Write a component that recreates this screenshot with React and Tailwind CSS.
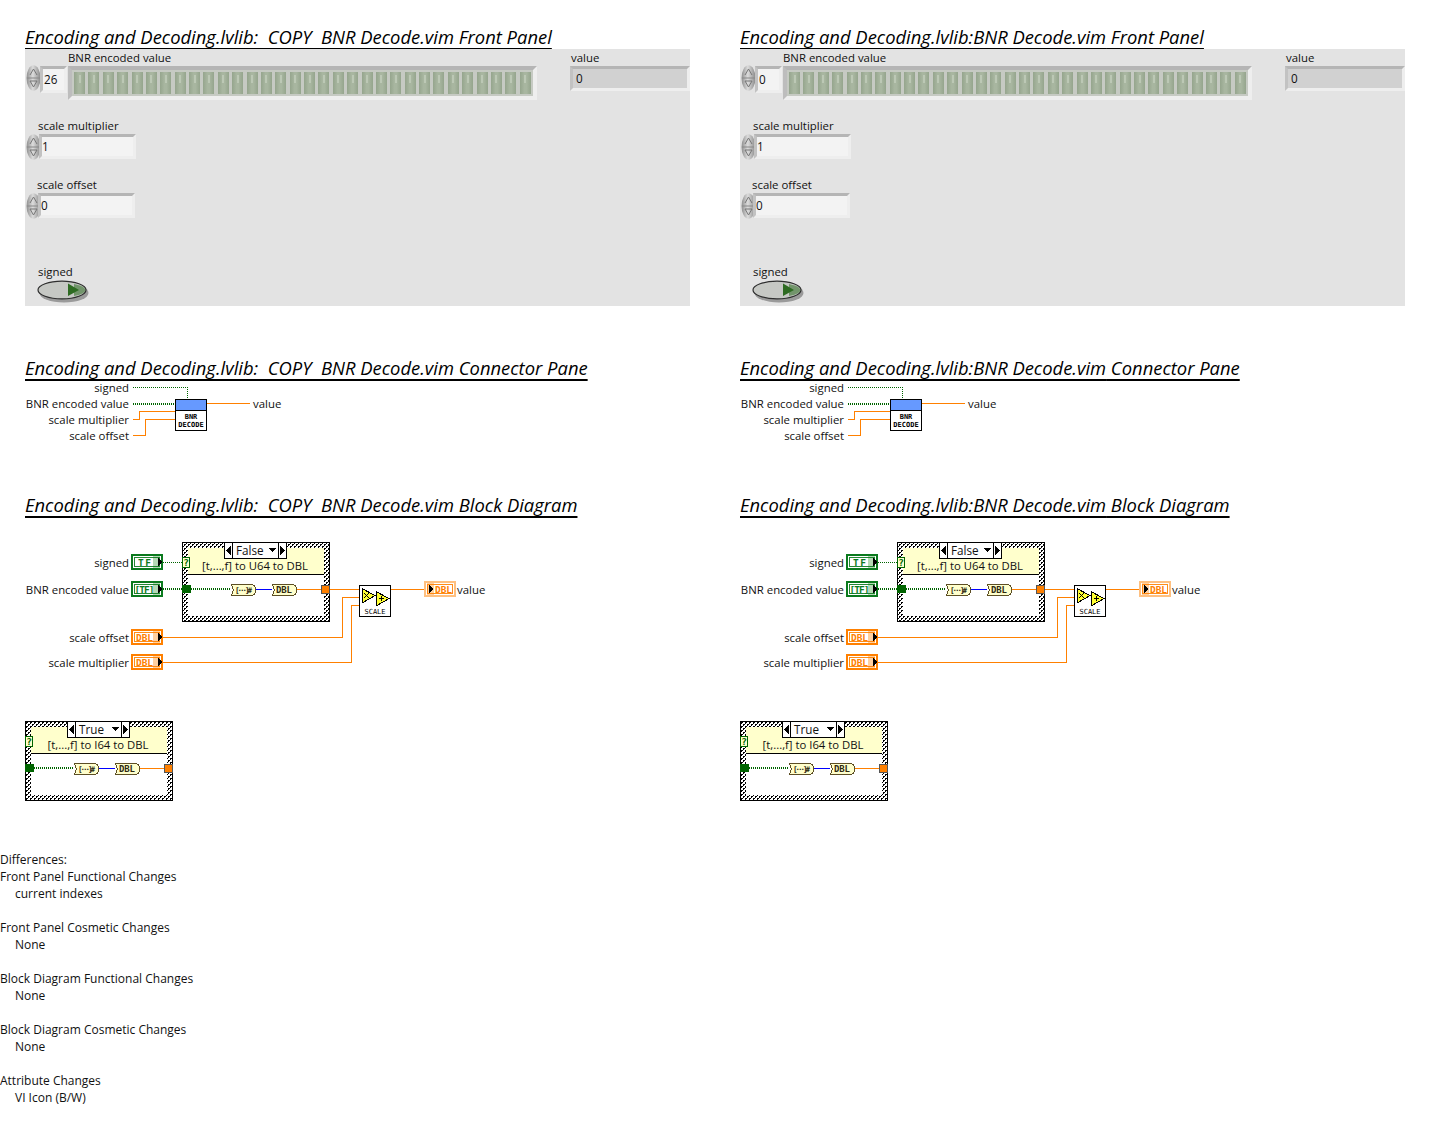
const FONT = 'font-["Open_Sans","Noto_Sans",sans-serif]';
const ORANGE = '#ff8000';
const GREEN = '#006400';
const MONO = '"DejaVu Sans Mono", "Liberation Mono", monospace';

const SIDES = [
  { name: 'Encoding and Decoding.lvlib:  COPY  BNR Decode.vim', index: '26' },
  { name: 'Encoding and Decoding.lvlib:BNR Decode.vim', index: '0' },
];

const DIFFS = [
  ['Differences:'],
  ['Front Panel Functional Changes', 'current indexes'],
  [],
  ['Front Panel Cosmetic Changes', 'None'],
  [],
  ['Block Diagram Functional Changes', 'None'],
  [],
  ['Block Diagram Cosmetic Changes', 'None'],
  [],
  ['Attribute Changes', 'VI Icon (B/W)'],
];

function Title({ children, className = '' }) {
  return (
    <h2 className={`h-[22px] whitespace-pre text-[18.4px] leading-[20px] italic font-normal text-black underline decoration-[1.5px] underline-offset-[4px] ${className}`}>
      {children}
    </h2>
  );
}

// labels sit on the diagram canvas, x/y are the centre-left or centre-right point
function Label({ x, y, right, children }) {
  return (
    <span
      className="absolute -translate-y-1/2 whitespace-nowrap text-[11.4px] leading-[16px] text-[#111]"
      style={right ? { right: 715 - x, top: y } : { left: x, top: y }}
    >
      {children}
    </span>
  );
}

function Spinner({ x, y }) {
  return (
    <svg className="absolute" style={{ left: x, top: y }} width="15" height="26" viewBox="0 0 15 26">
      <defs>
        <linearGradient id="spin" x1="0" x2="1" y1="0" y2="0">
          <stop offset="0" stopColor="#8f8f8f" />
          <stop offset="0.45" stopColor="#dcdcdc" />
          <stop offset="1" stopColor="#8a8a8a" />
        </linearGradient>
      </defs>
      <ellipse cx="7.5" cy="13" rx="7" ry="12.8" fill="url(#spin)" />
      <line x1="1" y1="13" x2="14" y2="13" stroke="#888" />
      <path d="M7.5 4 L4 10 M7.5 4 L11 10" stroke="#777" fill="none" />
      <path d="M7.5 22 L4 16 M7.5 22 L11 16 M4 16 H11" stroke="#777" fill="none" />
    </svg>
  );
}

function Toggle({ x, y }) {
  return (
    <svg className="absolute" style={{ left: x, top: y }} width="52" height="23" viewBox="0 0 52 23">
      <ellipse cx="27" cy="13" rx="24.5" ry="9.5" fill="#9a9a9a" />
      <ellipse cx="25" cy="10" rx="24" ry="8.8" fill="#c6c8c4" stroke="#2f2f2f" strokeWidth="1.2" />
      <path d="M31 3.5 L42 10 L31 16 Z" fill="#2e6b22" />
      <path d="M37 4 Q48 6 48.5 10 Q48 14 37 16 Z" fill="#2e6b22" opacity="0.55" />
    </svg>
  );
}

function NumBox({ x, y, w, h, fill = 'bg-[#f3f3f3]', pad = 'pl-0', children }) {
  return (
    <div
      className={`absolute border-[3px] border-t-[#b5b5b5] border-l-[#c2c2c2] border-r-[#eeeeee] border-b-[#eeeeee] text-[11.7px] leading-[16px] text-[#111] pb-[2px] flex items-center ${pad} ${fill}`}
      style={{ left: x, top: y, width: w, height: h }}
    >
      {children}
    </div>
  );
}

function FrontPanel({ index }) {
  return (
    <div className="relative h-[257px] w-[665px] bg-[#e3e3e3]">
      <Label x={43} y={9}>BNR encoded value</Label>
      <Spinner x={1} y={16} />
      <NumBox x={15} y={17} w={27} h={27} pad="pl-[1px]">{index}</NumBox>
      <div className="absolute left-[43px] top-[17px] w-[469px] h-[34px] border-[4px] border-t-[#b5b5b5] border-l-[#bdbdbd] border-r-[#eeeeee] border-b-[#eeeeee] bg-[#c6cac3] flex items-center justify-between px-[2px]">
        {Array.from({ length: 32 }).map((_, i) => (
          <div key={i} className="w-[11px] h-[22px] pt-[3px] flex justify-center bg-[linear-gradient(90deg,#95a58d,#a8b6a0_40%,#a8b6a0_60%,#95a58d)]">
            <div className="w-[2px] h-[8px] bg-[#bcc8b5]" />
          </div>
        ))}
      </div>
      <Label x={546} y={9}>value</Label>
      <NumBox x={545} y={17} w={120} h={25} fill="bg-[#d1d1d1]" pad="pl-[3px]">0</NumBox>

      <Label x={13} y={77}>scale multiplier</Label>
      <Spinner x={1} y={85} />
      <NumBox x={14} y={85} w={97} h={25}>1</NumBox>

      <Label x={12} y={136}>scale offset</Label>
      <Spinner x={1} y={144} />
      <NumBox x={13} y={144} w={97} h={25}>0</NumBox>

      <Label x={13} y={223}>signed</Label>
      <Toggle x={12} y={231} />
    </div>
  );
}

function ConnectorPane() {
  return (
    <div className="relative h-[60px] w-[715px]">
      <svg className="absolute inset-0" width="715" height="60" viewBox="25 380 715 60" fill="none" shapeRendering="crispEdges">
        <path d="M133 387.5 H187.5 V399" stroke={GREEN} strokeDasharray="1 1" />
        <path d="M133 403.5 H175" stroke={GREEN} strokeDasharray="1 1" strokeWidth="2" />
        <path d="M133 419.5 H139.5 V411.5 H175" stroke={ORANGE} />
        <path d="M133 435.5 H145.5 V419.5 H175" stroke={ORANGE} />
        <path d="M207 403.5 H250" stroke={ORANGE} />
        <rect x="175.5" y="399.5" width="31" height="31" fill="#fff" stroke="#000" />
        <rect x="176" y="400" width="30" height="10" fill="#6699ff" />
        <line x1="175" y1="410.5" x2="207" y2="410.5" stroke="#000" />
        <text x="191" y="419" textAnchor="middle" fontSize="7" fontWeight="700" fontFamily={MONO} fill="#000">BNR</text>
        <text x="191" y="427" textAnchor="middle" fontSize="7" fontWeight="700" fontFamily={MONO} fill="#000">DECODE</text>
      </svg>
      <Label x={104} y={8} right>signed</Label>
      <Label x={104} y={24} right>BNR encoded value</Label>
      <Label x={104} y={40} right>scale multiplier</Label>
      <Label x={104} y={56} right>scale offset</Label>
      <Label x={228} y={24}>value</Label>
    </div>
  );
}

function Terminal({ x, y, color, pale, label, indicator }) {
  const ax = indicator ? x + 3 : x + 22;
  const len = label === '[TF]' ? 20 : label === 'TF' ? 13 : 17;
  const tx = indicator ? x + 11 : x + 4 + (19 - len) / 2;
  return (
    <g>
      <rect x={x} y={y} width="32" height="16" fill={indicator ? pale : color} />
      <rect x={x + 2} y={y + 2} width="28" height="12" fill="#fff" />
      <rect x={ax} y={y + 2} width="7" height="12" fill={pale} opacity="0.75" />
      <rect x={x + 3.5} y={y + 3.5} width="25" height="9" stroke={color} opacity="0.9" />
      <text x={tx} y={y + 11.5} textLength={len} lengthAdjust="spacing" fontSize="9.5" fontWeight="700" fontFamily={MONO} fill={color}>{label}</text>
      {indicator
        ? <path d={`M${x + 5} ${y + 4} L${x + 10} ${y + 8} L${x + 5} ${y + 12} Z`} fill="#000" />
        : <path d={`M${x + 27} ${y + 4} L${x + 31} ${y + 8} L${x + 27} ${y + 12} Z`} fill="#000" />}
    </g>
  );
}

function Node({ x, y, w, len, size, children }) {
  return (
    <g>
      <path
        d={`M${x + 0.5} ${y + 0.5} H${x + w - 5} Q${x + w - 0.5} ${y + 0.5} ${x + w - 0.5} ${y + 6} Q${x + w - 0.5} ${y + 11.5} ${x + w - 5} ${y + 11.5} H${x + 0.5} L${x + 2.5} ${y + 6} Z`}
        fill="#ffffcc"
        stroke="#5c4e24"
      />
      <text x={x + 4} y={y + 9} textLength={len} lengthAdjust="spacing" fontSize={size} fontWeight="700" fontFamily={MONO} fill="#2e2810">{children}</text>
    </g>
  );
}

// case structure, drawn at dx/dy from the top one
function CaseBox({ dx, dy, selector, caption }) {
  const x = 182 + dx;
  const y = 542 + dy;
  return (
    <g>
      <rect x={x + 0.5} y={y + 0.5} width="147" height="79" fill="url(#hatch)" stroke="#000" />
      <rect x={x + 6} y={y + 6} width="136" height="68" fill="#fff" />
      <rect x={x + 6} y={y + 6} width="136" height="26" fill="#ffffcc" />
      <line x1={x + 6} y1={y + 32.5} x2={x + 142} y2={y + 32.5} stroke="#000" />
      <rect x={x + 42.5} y={y + 0.5} width="62" height="16" fill="#fff" stroke="#000" />
      <line x1={x + 50.5} y1={y} x2={x + 50.5} y2={y + 17} stroke="#000" />
      <line x1={x + 96.5} y1={y} x2={x + 96.5} y2={y + 17} stroke="#000" />
      <path d={`M${x + 49} ${y + 4} L${x + 44} ${y + 8.5} L${x + 49} ${y + 13} Z`} fill="#000" />
      <path d={`M${x + 98} ${y + 4} L${x + 103} ${y + 8.5} L${x + 98} ${y + 13} Z`} fill="#000" />
      <path d={`M${x + 86} ${y + 6} H${x + 94} L${x + 90} ${y + 10} Z`} fill="#000" />
      <text x={x + 54} y={y + 13} fontSize="11.7" fontFamily="Open Sans, sans-serif" fill="#111">{selector}</text>
      <text x={x + 73} y={y + 28} textAnchor="middle" fontSize="11.3" fontFamily="Open Sans, sans-serif" fill="#111">{caption}</text>
      <rect x={x + 0.5} y={y + 15.5} width="7" height="10" fill="#ffffcc" stroke={GREEN} />
      <text x={x + 4} y={y + 24} textAnchor="middle" fontSize="9.5" fontWeight="700" fontFamily={MONO} fill={GREEN}>?</text>
      <path d={`M${x + 9} ${y + 47} H${x + 49}`} stroke={GREEN} strokeWidth="2" strokeDasharray="1 1" />
      <path d={`M${x + 74} ${y + 47.5} H${x + 90}`} stroke="#0000ff" />
      <path d={`M${x + 115} ${y + 47.5} H${x + 139}`} stroke={ORANGE} />
      <rect x={x} y={y + 43} width="9" height="8" fill={GREEN} />
      <rect x={x + 139.5} y={y + 43.5} width="8" height="8" fill={ORANGE} stroke="#555" />
      <Node x={x + 49} y={y + 42} w={25} len={17} size={7.5}>[···]#</Node>
      <Node x={x + 90} y={y + 42} w={25} len={16} size={9}>DBL</Node>
    </g>
  );
}

function BlockDiagram() {
  return (
    <div className="relative h-[293px] w-[715px]">
      <svg className="absolute inset-0" width="715" height="293" viewBox="25 517 715 293" fill="none" shapeRendering="crispEdges">
        <defs>
          <pattern id="hatch" width="4" height="4" patternUnits="userSpaceOnUse">
            <rect width="4" height="4" fill="#fff" />
            <rect width="2" height="1" fill="#000" />
            <rect y="1" width="1" height="1" fill="#000" />
            <rect x="2" y="2" width="2" height="1" fill="#000" />
            <rect x="2" y="3" width="1" height="1" fill="#000" />
          </pattern>
        </defs>
        <path d="M163 562.5 H183" stroke={GREEN} strokeDasharray="1 1" />
        <path d="M163 589 H182" stroke={GREEN} strokeWidth="2" strokeDasharray="1 1" />
        <path d="M163 637.5 H342.5 V597.5 H359" stroke={ORANGE} />
        <path d="M163 662.5 H351.5 V605.5 H359" stroke={ORANGE} />
        <path d="M330 589.5 H359" stroke={ORANGE} />
        <path d="M391 589.5 H424" stroke={ORANGE} />
        <CaseBox dx={0} dy={0} selector="False" caption="[t,...,f] to U64 to DBL" />
        <CaseBox dx={-157} dy={179} selector="True" caption="[t,...,f] to I64 to DBL" />
        <Terminal x={131} y={554} color="#0b7a1e" pale="#9ccc9c" label="TF" />
        <Terminal x={131} y={581} color="#0b7a1e" pale="#9ccc9c" label="[TF]" />
        <Terminal x={131} y={629} color={ORANGE} pale="#ffc080" label="DBL" />
        <Terminal x={131} y={654} color={ORANGE} pale="#ffc080" label="DBL" />
        <Terminal x={424} y={581} color={ORANGE} pale="#ffc080" label="DBL" indicator />
        <rect x="359.5" y="585.5" width="31" height="31" fill="#fff" stroke="#000" />
        <path d="M362 588.5 L375 595.5 L362 603 Z" fill="#ffff33" stroke="#000" />
        <path d="M376 591.5 L389 598.5 L376 606 Z" fill="#ffff33" stroke="#000" />
        <path d="M364 593 L369 598 M369 593 L364 598 M379 598.5 H384 M381.5 596 V601" stroke="#000" />
        <text x="375" y="614" textAnchor="middle" fontSize="7" fontFamily={MONO} fill="#000">SCALE</text>
      </svg>
      <Label x={104} y={46} right>signed</Label>
      <Label x={104} y={73} right>BNR encoded value</Label>
      <Label x={104} y={121} right>scale offset</Label>
      <Label x={104} y={146} right>scale multiplier</Label>
      <Label x={432} y={73}>value</Label>
    </div>
  );
}

function Side({ name, index }) {
  return (
    <div className="w-[715px]">
      <Title className="mt-[27px]">{name} Front Panel</Title>
      <FrontPanel index={index} />
      <Title className="mt-[52px]">{name} Connector Pane</Title>
      <ConnectorPane />
      <Title className="mt-[55px]">{name} Block Diagram</Title>
      <BlockDiagram />
    </div>
  );
}

export default function App() {
  return (
    <div className={`w-[1430px] h-[1140px] overflow-hidden bg-white ${FONT}`}>
      <div className="flex pl-[25px]">
        {SIDES.map((s) => (
          <Side key={s.index} name={s.name} index={s.index} />
        ))}
      </div>
      <div className="mt-[41px] text-[12px] leading-[17px] text-[#111]">
        {DIFFS.map((d, i) =>
          d.length === 0 ? (
            <div key={i} className="h-[17px]" />
          ) : (
            <div key={i}>
              <p>{d[0]}</p>
              {d[1] && <p className="pl-[15px]">{d[1]}</p>}
            </div>
          )
        )}
      </div>
    </div>
  );
}
